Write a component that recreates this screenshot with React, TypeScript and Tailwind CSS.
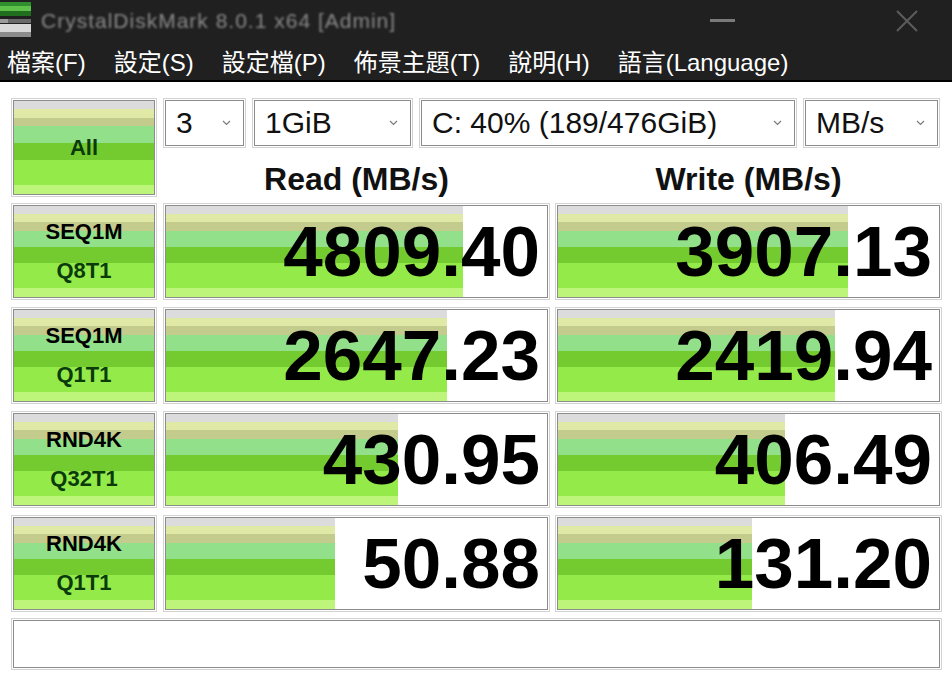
import React from "react";

const STRIPES =
  "bg-[linear-gradient(to_bottom,#dcdcdc_0%,#dcdcdc_9%,#e1e9a6_9%,#e1e9a6_18%,#c3cb8d_18%,#c3cb8d_27%,#93e08a_27%,#93e08a_45%,#74cb2f_45%,#74cb2f_63%,#93ea49_63%,#93ea49_90%,#bdf57a_90%,#bdf57a_100%)]";

const BOX = "border border-[#8c8c8c] outline outline-1 outline-offset-1 outline-[#d2d2d2]";

type Row = { a: string; b: string; read: string; write: string; rw: number; ww: number };

const rows: Row[] = [
  { a: "SEQ1M", b: "Q8T1", read: "4809.40", write: "3907.13", rw: 297, ww: 290 },
  { a: "SEQ1M", b: "Q1T1", read: "2647.23", write: "2419.94", rw: 281, ww: 277 },
  { a: "RND4K", b: "Q32T1", read: "430.95", write: "406.49", rw: 232, ww: 227 },
  { a: "RND4K", b: "Q1T1", read: "50.88", write: "131.20", rw: 169, ww: 194 },
];

function Chevron() {
  return (
    <svg width="9" height="6" viewBox="0 0 9 6" className="shrink-0">
      <polyline points="1,1 4.5,4.5 8,1" fill="none" stroke="#7a7a7a" strokeWidth="1.2" />
    </svg>
  );
}

function Combo({ text, w }: { text: string; w: string }) {
  return (
    <div className={`${w} h-full ${BOX} bg-white flex items-center justify-between pl-[10px] pr-[12px]`}>
      <span className="text-[30px] leading-none text-[#111]">{text}</span>
      <Chevron />
    </div>
  );
}

function BarCell({ value, width }: { value: string; width: number }) {
  return (
    <div className={`relative w-[383px] h-full ${BOX} bg-white`}>
      <div className={`absolute left-0 top-0 bottom-0 ${STRIPES}`} style={{ width }} />
      <div className="relative h-full flex items-center justify-end pr-[7px] text-[71px] font-bold leading-none text-black">
        {value}
      </div>
    </div>
  );
}

export default function App() {
  return (
    <div className="w-[952px] h-[679px] bg-white flex flex-col overflow-hidden font-[family-name:'Liberation_Sans','Noto_Sans_CJK_TC',sans-serif]">
      {/* Title bar */}
      <div className="h-[41px] bg-[#202020] flex items-center shrink-0">
        <svg width="34" height="38" viewBox="0 0 34 38" className="shrink-0">
          <rect x="0" y="0" width="31" height="4" fill="#2f8f2f" />
          <rect x="0" y="4" width="31" height="5" fill="#5ec24a" />
          <rect x="0" y="9" width="31" height="5" fill="#1f6f1f" />
          <rect x="0" y="17" width="8" height="4" fill="#9a9a9a" />
          <rect x="8" y="17" width="23" height="4" fill="#6a6a6a" />
          <rect x="0" y="22" width="31" height="8" fill="#d8d8d8" />
          <rect x="0" y="30" width="31" height="5" fill="#8c8c8c" />
        </svg>
        <span className="ml-[7px] text-[21px] text-[#8a8a8a] blur-[1.2px] tracking-[1px]">
          CrystalDiskMark 8.0.1 x64 [Admin]
        </span>
        <div className="flex-1" />
        <div className="w-[25px] h-[3px] bg-[#7a7a7a] mr-[160px]" />
        <svg width="24" height="24" viewBox="0 0 24 24" className="mr-[33px]">
          <path d="M2 2 L22 22 M22 2 L2 22" stroke="#5c5c5c" strokeWidth="2" />
        </svg>
      </div>
      {/* Menu bar */}
      <div className="h-[39px] bg-[#202020] flex items-center gap-[28px] pl-[7px] pt-[4px] text-[24px] text-white leading-none shrink-0">
        <span>檔案(F)</span>
        <span>設定(S)</span>
        <span>設定檔(P)</span>
        <span>佈景主題(T)</span>
        <span>說明(H)</span>
        <span>語言(Language)</span>
      </div>
      <div className="h-[2px] bg-black shrink-0" />

      {/* Content */}
      <div className="flex flex-col pt-[18px] pl-[13px] pr-[12px]">
        {/* Top row */}
        <div className="flex gap-[10px] h-[95px]">
          <div className={`w-[142px] h-full ${BOX} ${STRIPES} flex items-center justify-center`}>
            <span className="text-[22px] font-bold text-[#0b3b0b] leading-none">All</span>
          </div>
          <div className="flex flex-col">
            <div className="flex gap-[10px] h-[48px]">
              <Combo text="3" w="w-[79px]" />
              <Combo text="1GiB" w="w-[157px]" />
              <Combo text="C: 40% (189/476GiB)" w="w-[374px]" />
              <Combo text="MB/s" w="w-[133px]" />
            </div>
            <div className="flex gap-[9px] pt-[17px]">
              <div className="w-[383px] text-center text-[32px] font-bold leading-[32px] text-[#111]">Read (MB/s)</div>
              <div className="w-[383px] text-center text-[32px] font-bold leading-[32px] text-[#111]">Write (MB/s)</div>
            </div>
          </div>
        </div>

        {/* Result rows */}
        <div className="flex flex-col gap-[11px] mt-[10px]">
          {rows.map((r, i) => (
            <div key={i} className="flex h-[93px]">
              <div className={`w-[142px] h-full ${BOX} ${STRIPES} flex flex-col items-center pt-[15px] gap-[17px]`}>
                <span className="text-[22px] font-bold leading-[22px] text-black">{r.a}</span>
                <span className="text-[22px] font-bold leading-[22px] text-[#0b3b0b]">{r.b}</span>
              </div>
              <div className="w-[10px]" />
              <BarCell value={r.read} width={r.rw} />
              <div className="w-[9px]" />
              <BarCell value={r.write} width={r.ww} />
            </div>
          ))}
        </div>

        {/* Comment box */}
        <div className={`mt-[10px] w-[927px] h-[48px] ${BOX} bg-white`} />
      </div>
    </div>
  );
}
